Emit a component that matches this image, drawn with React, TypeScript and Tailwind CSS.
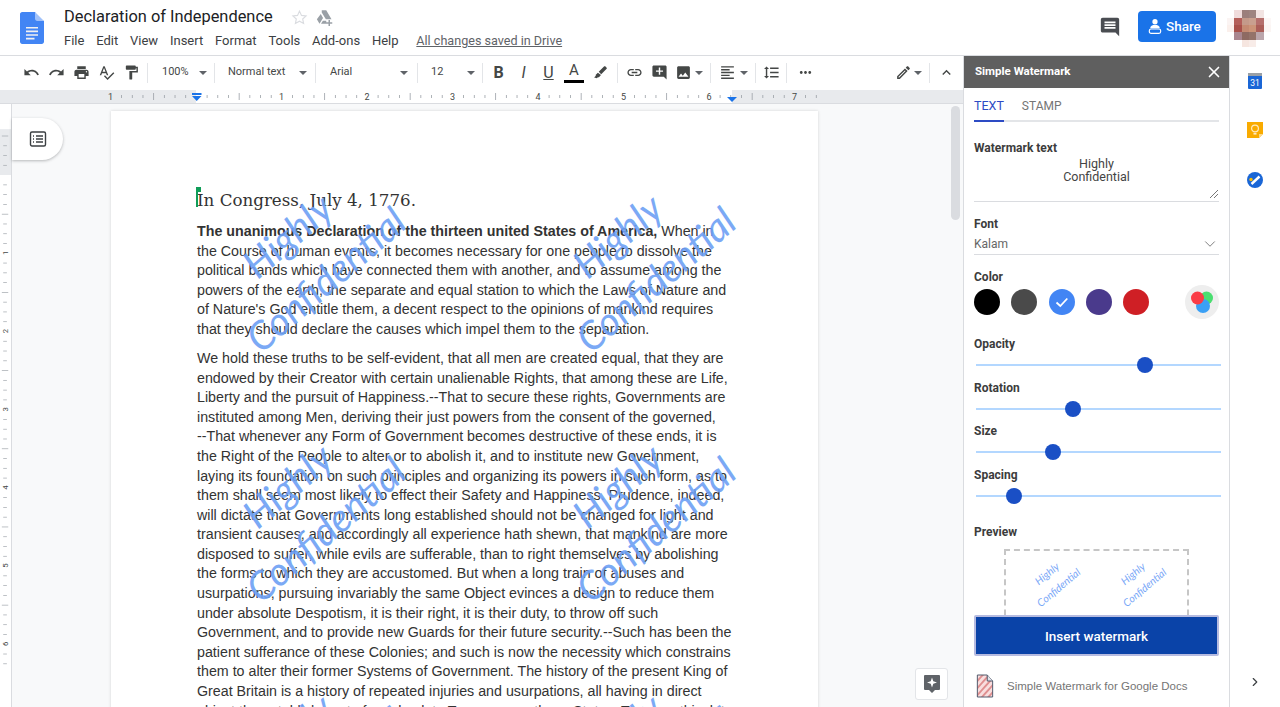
import React from "react";
import { ChevronDown, ChevronRight, X } from "lucide-react";

const P = {
  undo: "M12.5 8c-2.65 0-5.05.99-6.9 2.6L2 7v9h9l-3.62-3.62c1.39-1.16 3.16-1.88 5.12-1.88 3.54 0 6.55 2.31 7.6 5.5l2.37-.78C21.08 11.03 17.15 8 12.5 8z",
  redo: "M18.4 10.6C16.55 8.99 14.15 8 11.5 8c-4.65 0-8.58 3.03-9.96 7.22L3.9 16c1.05-3.19 4.05-5.5 7.6-5.5 1.95 0 3.73.72 5.12 1.88L13 16h9V7l-3.6 3.6z",
  print: "M19 8H5c-1.66 0-3 1.34-3 3v6h4v4h12v-4h4v-6c0-1.66-1.34-3-3-3zm-3 11H8v-5h8v5zm3-7c-.55 0-1-.45-1-1s.45-1 1-1 1 .45 1 1-.45 1-1 1zm-1-9H6v4h12V3z",
  spell: "M12.45 16h2.09L9.43 3H7.57L2.46 16h2.09l1.12-3h5.64l1.14 3zm-6.02-5L8.5 5.48 10.57 11H6.43zm15.16.59l-8.09 8.09L9.83 16l-1.41 1.41 5.09 5.09L23 13l-1.41-1.41z",
  paint: "M18 4V3c0-.55-.45-1-1-1H5c-.55 0-1 .45-1 1v4c0 .55.45 1 1 1h12c.55 0 1-.45 1-1V6h1v4H9v11c0 .55.45 1 1 1h2c.55 0 1-.45 1-1v-9h8V4h-3z",
  ink: "M20.7 5.3l-2-2c-.4-.4-1-.4-1.4 0L9.5 11l3.5 3.5 7.7-7.8c.4-.4.4-1 0-1.4zM8.3 12.3L5 15.5l.5 1L3 19l4 1 1.5-1.5 1 .5 3.2-3.3-4.4-3.4z",
  link: "M3.9 12c0-1.71 1.39-3.1 3.1-3.1h4V7H7c-2.76 0-5 2.24-5 5s2.24 5 5 5h4v-1.9H7c-1.71 0-3.1-1.39-3.1-3.1zM8 13h8v-2H8v2zm9-6h-4v1.9h4c1.71 0 3.1 1.39 3.1 3.1s-1.39 3.1-3.1 3.1h-4V17h4c2.76 0 5-2.24 5-5s-2.24-5-5-5z",
  addComment: "M21.99 4c0-1.1-.89-2-1.99-2H4c-1.1 0-2 .9-2 2v12c0 1.1.9 2 2 2h14l4 4-.01-18zM17 11h-4v4h-2v-4H7V9h4V5h2v4h4v2z",
  image: "M21 19V5c0-1.1-.9-2-2-2H5c-1.1 0-2 .9-2 2v14c0 1.1.9 2 2 2h14c1.1 0 2-.9 2-2zM8.5 13.5l2.5 3.01L14.5 12l4.5 6H5l3.5-4.5z",
  align: "M15 15H3v2h12v-2zm0-8H3v2h12V7zM3 13h18v-2H3v2zm0 8h18v-2H3v2zM3 3v2h18V3H3z",
  spacing: "M6 7h2.5L5 3.5 1.5 7H4v10H1.5L5 20.5 8.5 17H6V7zm4-2v2h12V5H10zm0 14h12v-2H10v2zm0-6h12v-2H10v2z",
  more: "M6 10c-1.1 0-2 .9-2 2s.9 2 2 2 2-.9 2-2-.9-2-2-2zm12 0c-1.1 0-2 .9-2 2s.9 2 2 2 2-.9 2-2-.9-2-2-2zm-6 0c-1.1 0-2 .9-2 2s.9 2 2 2 2-.9 2-2-.9-2-2-2z",
  edit: "M14.06 9.02l.92.92L5.92 19H5v-.92l9.06-9.06M17.66 3c-.25 0-.51.1-.7.29l-1.83 1.83 3.75 3.75 1.83-1.83c.39-.39.39-1.02 0-1.41l-2.34-2.34c-.2-.2-.45-.29-.71-.29zm-3.6 3.19L3 17.25V21h3.75L17.81 9.94l-3.75-3.75z",
  less: "M12 8l-6 6 1.41 1.41L12 10.83l4.59 4.58L18 14z",
  comment: "M21.99 4c0-1.1-.89-2-1.99-2H4c-1.1 0-2 .9-2 2v12c0 1.1.9 2 2 2h14l4 4-.01-18zM18 14H6v-2h12v2zm0-3H6V9h12v2zm0-3H6V6h12v2z",
};

function Icon({ d, size = 18, color = "#444746" }: { d: string; size?: number; color?: string }) {
  return (
    <svg width={size} height={size} viewBox="0 0 24 24" fill={color} className="shrink-0">
      <path d={d} />
    </svg>
  );
}

function Caret() {
  return <span className="block h-0 w-0 shrink-0 border-x-[4px] border-t-[4px] border-x-transparent border-t-[#5f6368]" />;
}

function Sep() {
  return <span className="mx-[3px] h-[20px] w-px shrink-0 bg-[#e3e5e8]" />;
}

function Tool({ d, w = 25 }: { d: string; w?: number }) {
  return (
    <span className="flex h-[24px] items-center justify-center" style={{ width: w }}>
      <Icon d={d} size={17} />
    </span>
  );
}

function LetterTool({ children, className }: { children: React.ReactNode; className?: string }) {
  return (
    <span className={`flex h-[24px] w-[25px] items-center justify-center text-[16px] text-[#444746] ${className ?? ""}`}>
      {children}
    </span>
  );
}

function Drop({ label, w, pl, pr }: { label: string; w: string; pl: string; pr: string }) {
  return (
    <span className={`flex h-[24px] items-center justify-between text-[11px] text-[#444746] ${w} ${pl} ${pr}`}>
      <span>{label}</span>
      <Caret />
    </span>
  );
}

function DocsLogo() {
  return (
    <svg width="24" height="32" viewBox="0 0 24 32">
      <path d="M15 0H2.2C1 0 0 1 0 2.2v27.6C0 31 1 32 2.2 32h19.6c1.2 0 2.2-1 2.2-2.2V9l-6-3z" fill="#4285f4" />
      <path d="M15 0l9 9h-6.8C16 9 15 8 15 6.8z" fill="#a1c2fa" />
      <path d="M6 15h12v1.6H6zM6 18.6h12v1.6H6zM6 22.2h12v1.6H6zM6 25.8h8.5v1.6H6z" fill="#f1f1f1" />
    </svg>
  );
}

const avatar = [
  ["#ffffff", "#f0dcdc", "#9c7f7c", "#9e8480", "#f2e4e2", "#ffffff"],
  ["#fbf4f3", "#b45f5a", "#c49a8a", "#c9a08f", "#b56f6c", "#fcf7f6"],
  ["#fbf0ec", "#a8504a", "#c48a72", "#cc9478", "#ab5e58", "#fbf5f3"],
  ["#ffffff", "#a9868f", "#8e6a62", "#94736a", "#bba6ac", "#ffffff"],
  ["#ffffff", "#ffffff", "#f6e6e0", "#f8ece8", "#ffffff", "#ffffff"],
];

function Avatar() {
  return (
    <svg width="44" height="37" viewBox="0 0 6 5" shapeRendering="crispEdges" className="shrink-0">
      {avatar.map((row, y) => row.map((c, x) => <rect key={`${x}-${y}`} x={x} y={y} width="1.02" height="1.02" fill={c} />))}
    </svg>
  );
}

function Header() {
  const menu = ["File", "Edit", "View", "Insert", "Format", "Tools", "Add-ons", "Help"];
  return (
    <header className="flex h-[56px] shrink-0 items-start border-b border-[#dadce0] bg-white">
      <div className="ml-[20px] mt-[12px]">
        <DocsLogo />
      </div>
      <div className="ml-[20px] mt-[6px] flex-1">
        <div className="flex h-[22px] items-center">
          <span className="text-[16.4px] leading-[22px] text-[#202124]">Declaration of Independence</span>
          <svg width="17" height="17" viewBox="0 0 24 24" fill="none" stroke="#dadce0" strokeWidth="1.6" className="ml-[18px]">
            <path d="M12 3l2.8 6 6.5.7-4.8 4.4 1.3 6.4L12 17.3l-5.8 3.2 1.3-6.4-4.8-4.4 6.5-.7z" />
          </svg>
          <svg width="18" height="18" viewBox="0 0 24 24" fill="#9aa0a6" className="ml-[7px]">
            <path d="M9 3h6l7 12h-7.5L9 6zM7.7 8l3 5.2L6 21l-3.5-6zM8 21l2.5-4H15v4zM18 16h2v3h3v2h-3v3h-2v-3h-3v-2h3z" />
          </svg>
        </div>
        <div className="mt-[3px] flex h-[20px] items-center text-[13px] text-[#3c4043]">
          {menu.map((m) => (
            <span key={m} className="mr-[11.8px]">
              {m}
            </span>
          ))}
          <span className="ml-[6px] text-[12.6px] text-[#5f6368] underline">All changes saved in Drive</span>
        </div>
      </div>
      <div className="mt-[11px] flex items-start">
        <div className="mr-[17px] mt-[5px]">
          <Icon d={P.comment} size={22} color="#4a4d52" />
        </div>
        <div className="flex h-[31px] w-[78px] items-center gap-[4px] rounded-[4px] bg-[#1a73e8] pl-[10px] text-[13.5px] font-medium text-white">
          <svg width="14" height="17" viewBox="0 0 16 18" fill="#fff">
            <circle cx="8" cy="3.5" r="3" />
            <path d="M2.5 11c0-2.6 2.4-4 5.5-4s5.5 1.4 5.5 4z" />
            <rect x="1.5" y="11.8" width="13" height="5" rx="2" fill="none" stroke="#fff" strokeWidth="1.3" />
          </svg>
          <span>Share</span>
        </div>
        <div className="-mt-[1px] ml-[11px] mr-[9px]">
          <Avatar />
        </div>
      </div>
    </header>
  );
}

function Toolbar() {
  return (
    <div className="flex h-[34px] shrink-0 items-center bg-white pb-[1px] pl-[19px]">
      <Tool d={P.undo} />
      <Tool d={P.redo} />
      <Tool d={P.print} />
      <Tool d={P.spell} />
      <Tool d={P.paint} />
      <Sep />
      <Drop label="100%" w="w-[60px]" pl="pl-[11px]" pr="pr-[4px]" />
      <Sep />
      <Drop label="Normal text" w="w-[94px]" pl="pl-[10px]" pr="pr-[5px]" />
      <Sep />
      <Drop label="Arial" w="w-[95px]" pl="pl-[11px]" pr="pr-[6px]" />
      <Sep />
      <Drop label="12" w="w-[58px]" pl="pl-[10px]" pr="pr-[4px]" />
      <Sep />
      <LetterTool className="font-bold">B</LetterTool>
      <LetterTool className="italic">I</LetterTool>
      <LetterTool className="underline">U</LetterTool>
      <span className="flex h-[24px] w-[26px] flex-col items-center text-[15px] leading-[19px] text-[#444746]">
        A<span className="h-[3px] w-[20px] bg-black" />
      </span>
      <Tool d={P.ink} w={27} />
      <Sep />
      <Tool d={P.link} w={26} />
      <Tool d={P.addComment} />
      <Tool d={P.image} w={23} />
      <Caret />
      <span className="w-[4px]" />
      <Sep />
      <Tool d={P.align} w={26} />
      <Caret />
      <span className="w-[4px]" />
      <Sep />
      <Tool d={P.spacing} w={24} />
      <Sep />
      <Tool d={P.more} w={30} />
      <span className="flex-1" />
      <Tool d={P.edit} w={22} />
      <Caret />
      <span className="w-[4px]" />
      <Sep />
      <Tool d={P.less} w={26} />
      <span className="w-[4px]" />
    </div>
  );
}

function Ruler() {
  const inch = 85.5;
  const start = 196;
  const ticks: React.ReactNode[] = [];
  for (let i = -8; i <= 60; i++) {
    const x = start + (i * inch) / 8;
    if (x < 100 || x > 818 || i % 8 === 0) continue;
    const long = i % 4 === 0;
    ticks.push(<rect key={i} x={x} y={long ? 3 : 5} width="0.8" height={long ? 7 : 3} fill="#9aa0a6" />);
  }
  return (
    <div className="h-[14px] shrink-0 border-b border-[#dadce0] bg-[#e8eaed]">
      <svg width="964" height="13" viewBox="0 0 964 13">
        <rect x="196" y="0" width="536" height="13" fill="#fff" />
        {ticks}
        {[-1, 1, 2, 3, 4, 5, 6, 7].map((n) => (
          <text key={n} x={start + n * inch} y="10" fontSize="9" textAnchor="middle" fill="#444746" fontFamily="Roboto, sans-serif">
            {Math.abs(n)}
          </text>
        ))}
        <path d="M192 3h9.5v2h-9.5zM192 6h9.5l-4.75 5z" fill="#1a73e8" />
        <path d="M727 7h10l-5 5z" fill="#1a73e8" />
      </svg>
    </div>
  );
}

function SideRuler() {
  const origin = 49.7;
  const marks: React.ReactNode[] = [];
  for (let i = -4; i <= 50; i++) {
    const y = origin + (i * 85.3) / 8;
    if (i % 8 === 0) continue;
    const long = i % 4 === 0;
    marks.push(<rect key={i} x={long ? 2 : 3.5} y={y} width={long ? 7 : 4} height="0.8" fill="#a6abb1" />);
  }
  return (
    <svg width="12" height="604" viewBox="0 0 12 604" className="shrink-0 border-r border-[#dadce0] bg-white">
      <rect width="12" height="50" fill="#e8eaed" />
      {marks}
      {[1, 2, 3, 4, 5, 6].map((n) => (
        <text key={n} x="6" y={origin + n * 85.3 + 3} fontSize="8.5" textAnchor="middle" fill="#444746" fontFamily="Roboto, sans-serif" transform={`rotate(-90 6 ${origin + n * 85.3})`}>
          {n}
        </text>
      ))}
    </svg>
  );
}

const para1 = [
  "the Course of human events, it becomes necessary for one people to dissolve the",
  "political bands which have connected them with another, and to assume among the",
  "powers of the earth, the separate and equal station to which the Laws of Nature and",
  "of Nature's God entitle them, a decent respect to the opinions of mankind requires",
  "that they should declare the causes which impel them to the separation.",
];

const para2 = [
  "We hold these truths to be self-evident, that all men are created equal, that they are",
  "endowed by their Creator with certain unalienable Rights, that among these are Life,",
  "Liberty and the pursuit of Happiness.--That to secure these rights, Governments are",
  "instituted among Men, deriving their just powers from the consent of the governed,",
  "--That whenever any Form of Government becomes destructive of these ends, it is",
  "the Right of the People to alter or to abolish it, and to institute new Government,",
  "laying its foundation on such principles and organizing its powers in such form, as to",
  "them shall seem most likely to effect their Safety and Happiness. Prudence, indeed,",
  "will dictate that Governments long established should not be changed for light and",
  "transient causes; and accordingly all experience hath shewn, that mankind are more",
  "disposed to suffer, while evils are sufferable, than to right themselves by abolishing",
  "the forms to which they are accustomed. But when a long train of abuses and",
  "usurpations, pursuing invariably the same Object evinces a design to reduce them",
  "under absolute Despotism, it is their right, it is their duty, to throw off such",
  "Government, and to provide new Guards for their future security.--Such has been the",
  "patient sufferance of these Colonies; and such is now the necessity which constrains",
  "them to alter their former Systems of Government. The history of the present King of",
  "Great Britain is a history of repeated injuries and usurpations, all having in direct",
  "object the establishment of an absolute Tyranny over these States. To prove this, let",
];

function Mark({ className }: { className: string }) {
  return (
    <div className={`pointer-events-none absolute w-[240px] -rotate-[41deg] text-center font-['Lato',sans-serif] text-[39px] italic leading-[58px] text-[#6da0f5] opacity-90 ${className}`}>
      <div>Highly</div>
      <div>Confidential</div>
    </div>
  );
}

function Page() {
  return (
    <div className="relative ml-[99px] mt-[7px] h-[700px] w-[707px] bg-white pl-[86px] pt-[76px] font-['Liberation_Sans',Arial,sans-serif] text-[14.26px] leading-[19.6px] text-[#333] shadow-[0_0_3px_rgba(0,0,0,0.15)]">
      <div className="relative mb-[9px] h-[26px] whitespace-nowrap font-['DejaVu_Serif',serif] text-[16.7px] leading-[26px] text-[#333]">
        <span className="absolute -left-px top-0 h-[20px] w-[2px] bg-[#0f9d58]" />
        <span className="absolute -left-[1px] top-0 h-[5px] w-[5px] bg-[#0f9d58]" />
        In Congress, July 4, 1776.
      </div>
      <div className="mb-[9.4px] whitespace-nowrap">
        <div>
          <b>The unanimous Declaration of the thirteen united States of America,</b> When in
        </div>
        {para1.map((l) => (
          <div key={l}>{l}</div>
        ))}
      </div>
      <div className="whitespace-nowrap">
        {para2.map((l) => (
          <div key={l}>{l}</div>
        ))}
      </div>
      <Mark className="left-[75px] top-[88px]" />
      <Mark className="left-[405px] top-[88px]" />
      <Mark className="left-[75px] top-[338px]" />
      <Mark className="left-[405px] top-[338px]" />
      <Mark className="left-[75px] top-[588px]" />
      <Mark className="left-[405px] top-[588px]" />
    </div>
  );
}

function DocArea() {
  return (
    <div className="relative flex min-h-0 flex-1 overflow-hidden bg-[#f8f9fa]">
      <SideRuler />
      <Page />
      <div className="absolute left-[12px] top-[14px] flex h-[42px] w-[51px] items-center justify-center rounded-r-[21px] bg-white shadow-[0_1px_3px_rgba(60,64,67,0.35)]">
        <svg width="18" height="18" viewBox="0 0 18 18" fill="none" stroke="#3c4043" strokeWidth="1.4">
          <rect x="1.5" y="2" width="15" height="14" rx="1.5" />
          <path d="M4 6h1M7 6h7M4 9h1M7 9h7M4 12h1M7 12h7" />
        </svg>
      </div>
      <div className="absolute right-[3px] top-[2px] h-[114px] w-[9px] rounded-full bg-[#dadce0]" />
      <div className="absolute bottom-[7px] right-[15px] flex h-[32px] w-[33px] items-center justify-center rounded-[3px] border border-[#e3e5e8] bg-white">
        <svg width="18" height="20" viewBox="0 0 18 20">
          <path d="M2 1h14a1 1 0 0 1 1 1v13a1 1 0 0 1-1 1h-4l-3 3-3-3H2a1 1 0 0 1-1-1V2a1 1 0 0 1 1-1z" fill="#5f6368" />
          <path d="M9 3.5l1.3 3.7 3.7 1.3-3.7 1.3L9 13.5l-1.3-3.7L4 8.5l3.7-1.3z" fill="#fff" />
        </svg>
      </div>
    </div>
  );
}

function Label({ children, className }: { children: React.ReactNode; className?: string }) {
  return <div className={`text-[12px] font-bold leading-[14px] text-[#3c3c3c] ${className ?? ""}`}>{children}</div>;
}

function Slider({ label, value }: { label: string; value: number }) {
  return (
    <div className="h-[43.6px]">
      <Label>{label}</Label>
      <div className="relative ml-[2px] mr-[-2px] mt-[6px] h-[16px]">
        <div className="absolute inset-x-0 top-[7px] h-[2px] bg-[#b3d7ff]" />
        <div className="absolute top-0 h-[16px] w-[16px] -translate-x-1/2 rounded-full bg-[#1a4fc5]" style={{ left: `${value}%` }} />
      </div>
    </div>
  );
}

const swatches = ["#000000", "#4a4a4a", "#4285f4", "#4a3a8c", "#cf1f25"];

function Colors() {
  return (
    <div className="mt-[1px] flex items-center">
      {swatches.map((c) => (
        <span key={c} className="mr-[11.3px] flex h-[26px] w-[26px] items-center justify-center rounded-full" style={{ backgroundColor: c }}>
          {c === "#4285f4" && (
            <svg width="16" height="16" viewBox="0 0 16 16" fill="none" stroke="#fff" strokeWidth="1.8">
              <path d="M2.5 8.5l3.8 3.5 7-7.5" />
            </svg>
          )}
        </span>
      ))}
      <span className="ml-auto flex h-[34px] w-[34px] items-center justify-center rounded-full bg-[#eeeeee]">
        <svg width="26" height="26" viewBox="0 0 26 26">
          <circle cx="17.5" cy="9" r="6.5" fill="#4ade70" />
          <circle cx="14" cy="17" r="7" fill="#3aa0f5" />
          <circle cx="8.5" cy="9" r="6.5" fill="#fa3c46" />
        </svg>
      </span>
    </div>
  );
}

function PreviewText() {
  return (
    <div className="h-[40px] w-[80px] shrink-0 -rotate-[40deg] text-center font-['Lato',sans-serif] text-[10.5px] italic leading-[18px] text-[#7aa7f7]">
      <div>Highly</div>
      <div>Confidential</div>
    </div>
  );
}

function Panel() {
  return (
    <aside className="flex w-[267px] shrink-0 flex-col overflow-hidden border-x border-[#dadce0] bg-white font-['Roboto',sans-serif]">
      <div className="flex h-[32px] shrink-0 items-center justify-between bg-[#5f5f5f] pl-[11px] pr-[6px] text-[11.5px] font-bold text-white">
        <span>Simple Watermark</span>
        <X size={18} color="#fff" strokeWidth={2.2} />
      </div>
      <div className="px-[10px]">
        <div className="flex h-[34px] items-end border-b-2 border-[#e3e5e8] text-[12.5px] leading-[26px]">
          <span className="-mb-[2px] border-b-2 border-[#2d4bc4] pb-[1px] text-[#2d4bc4]">TEXT</span>
          <span className="ml-[18px] pb-[1px] text-[12px] text-[#757575]">STAMP</span>
        </div>
        <Label className="mt-[19px]">Watermark text</Label>
        <div className="relative h-[47px] border-b border-[#dadce0] pt-[2px] text-center text-[12.5px] leading-[13px] text-[#444]">
          <div>Highly</div>
          <div>Confidential</div>
          <svg width="8" height="8" viewBox="0 0 8 8" stroke="#777" className="absolute bottom-[3px] right-[1px]">
            <path d="M0 8l8-8M4 8l4-4" />
          </svg>
        </div>
        <Label className="mt-[15px]">Font</Label>
        <div className="flex h-[24px] items-center justify-between border-b border-[#dadce0] pt-[2px] text-[12px] text-[#666]">
          <span>Kalam</span>
          <ChevronDown size={18} strokeWidth={1} color="#555" />
        </div>
        <Label className="mt-[15px]">Color</Label>
        <Colors />
        <div className="mt-[18px]">
          <Slider label="Opacity" value={69} />
          <Slider label="Rotation" value={39.6} />
          <Slider label="Size" value={31.4} />
          <Slider label="Spacing" value={15.5} />
        </div>
        <Label className="mt-[14px]">Preview</Label>
        <div className="mx-[30px] mt-[10px] flex h-[107px] gap-[6px] border-2 border-dashed border-[#c6c6c6] pl-[8px] pt-[11px]">
          <PreviewText />
          <PreviewText />
        </div>
        <div className="relative -mt-[41px] flex h-[41px] items-center justify-center rounded-[2px] border-2 border-[#b6bbe0] bg-[#0a43a8] text-[13.5px] font-medium text-white">
          Insert watermark
        </div>
        <div className="ml-[2px] mt-[18px] flex items-center">
          <svg width="18" height="24" viewBox="0 0 20 24" preserveAspectRatio="none">
            <defs>
              <pattern id="stripes" width="5" height="5" patternUnits="userSpaceOnUse" patternTransform="rotate(45)">
                <rect width="5" height="5" fill="#f8dede" />
                <rect width="2" height="5" fill="#df8f90" />
              </pattern>
            </defs>
            <path d="M1.5 1h11l6 6v16h-17z" fill="url(#stripes)" stroke="#4a5568" strokeWidth="1" />
            <path d="M12.5 1v6h6" fill="#dfe3ea" stroke="#4a5568" strokeWidth="1" />
          </svg>
          <span className="ml-[13px] font-['Liberation_Sans',sans-serif] text-[11.5px] text-[#757575]">Simple Watermark for Google Docs</span>
        </div>
      </div>
    </aside>
  );
}

function Rail() {
  return (
    <div className="relative flex flex-1 flex-col items-center bg-white pt-[17px]">
      <svg width="14" height="16" viewBox="0 0 14 16">
        <rect width="14" height="16" rx="1" fill="#1a66d6" />
        <rect width="14" height="3" fill="#9aa0a6" />
        <text x="7" y="13" fontSize="8.5" textAnchor="middle" fill="#fff" fontFamily="Roboto, sans-serif">31</text>
      </svg>
      <svg width="16" height="16" viewBox="0 0 16 16" className="mt-[33px]">
        <path d="M0 0h16v12l-4 4H0z" fill="#f9ab00" />
        <path d="M12 16v-4h4z" fill="#fcd98a" />
        <circle cx="8" cy="6.5" r="3.4" fill="none" stroke="#ffe9bf" strokeWidth="1.2" />
        <path d="M6.5 11h3v1.6h-3z" fill="#ffe9bf" />
      </svg>
      <svg width="16" height="16" viewBox="0 0 16 16" className="mt-[34px]">
        <circle cx="8" cy="8" r="8" fill="#1a66d6" />
        <path d="M4.5 12L12.5 4.5" stroke="#fff" strokeWidth="2.4" />
        <circle cx="4" cy="7.5" r="1.7" fill="#fbbc04" />
      </svg>
      <ChevronRight size={14} color="#3c4043" className="absolute bottom-[18px]" />
    </div>
  );
}

export default function App() {
  return (
    <div className="flex h-[707px] w-[1280px] flex-col overflow-hidden bg-white font-['Roboto',sans-serif]">
      <Header />
      <div className="flex min-h-0 flex-1">
        <div className="flex w-[963px] shrink-0 flex-col">
          <Toolbar />
          <Ruler />
          <DocArea />
        </div>
        <Panel />
        <Rail />
      </div>
    </div>
  );
}
